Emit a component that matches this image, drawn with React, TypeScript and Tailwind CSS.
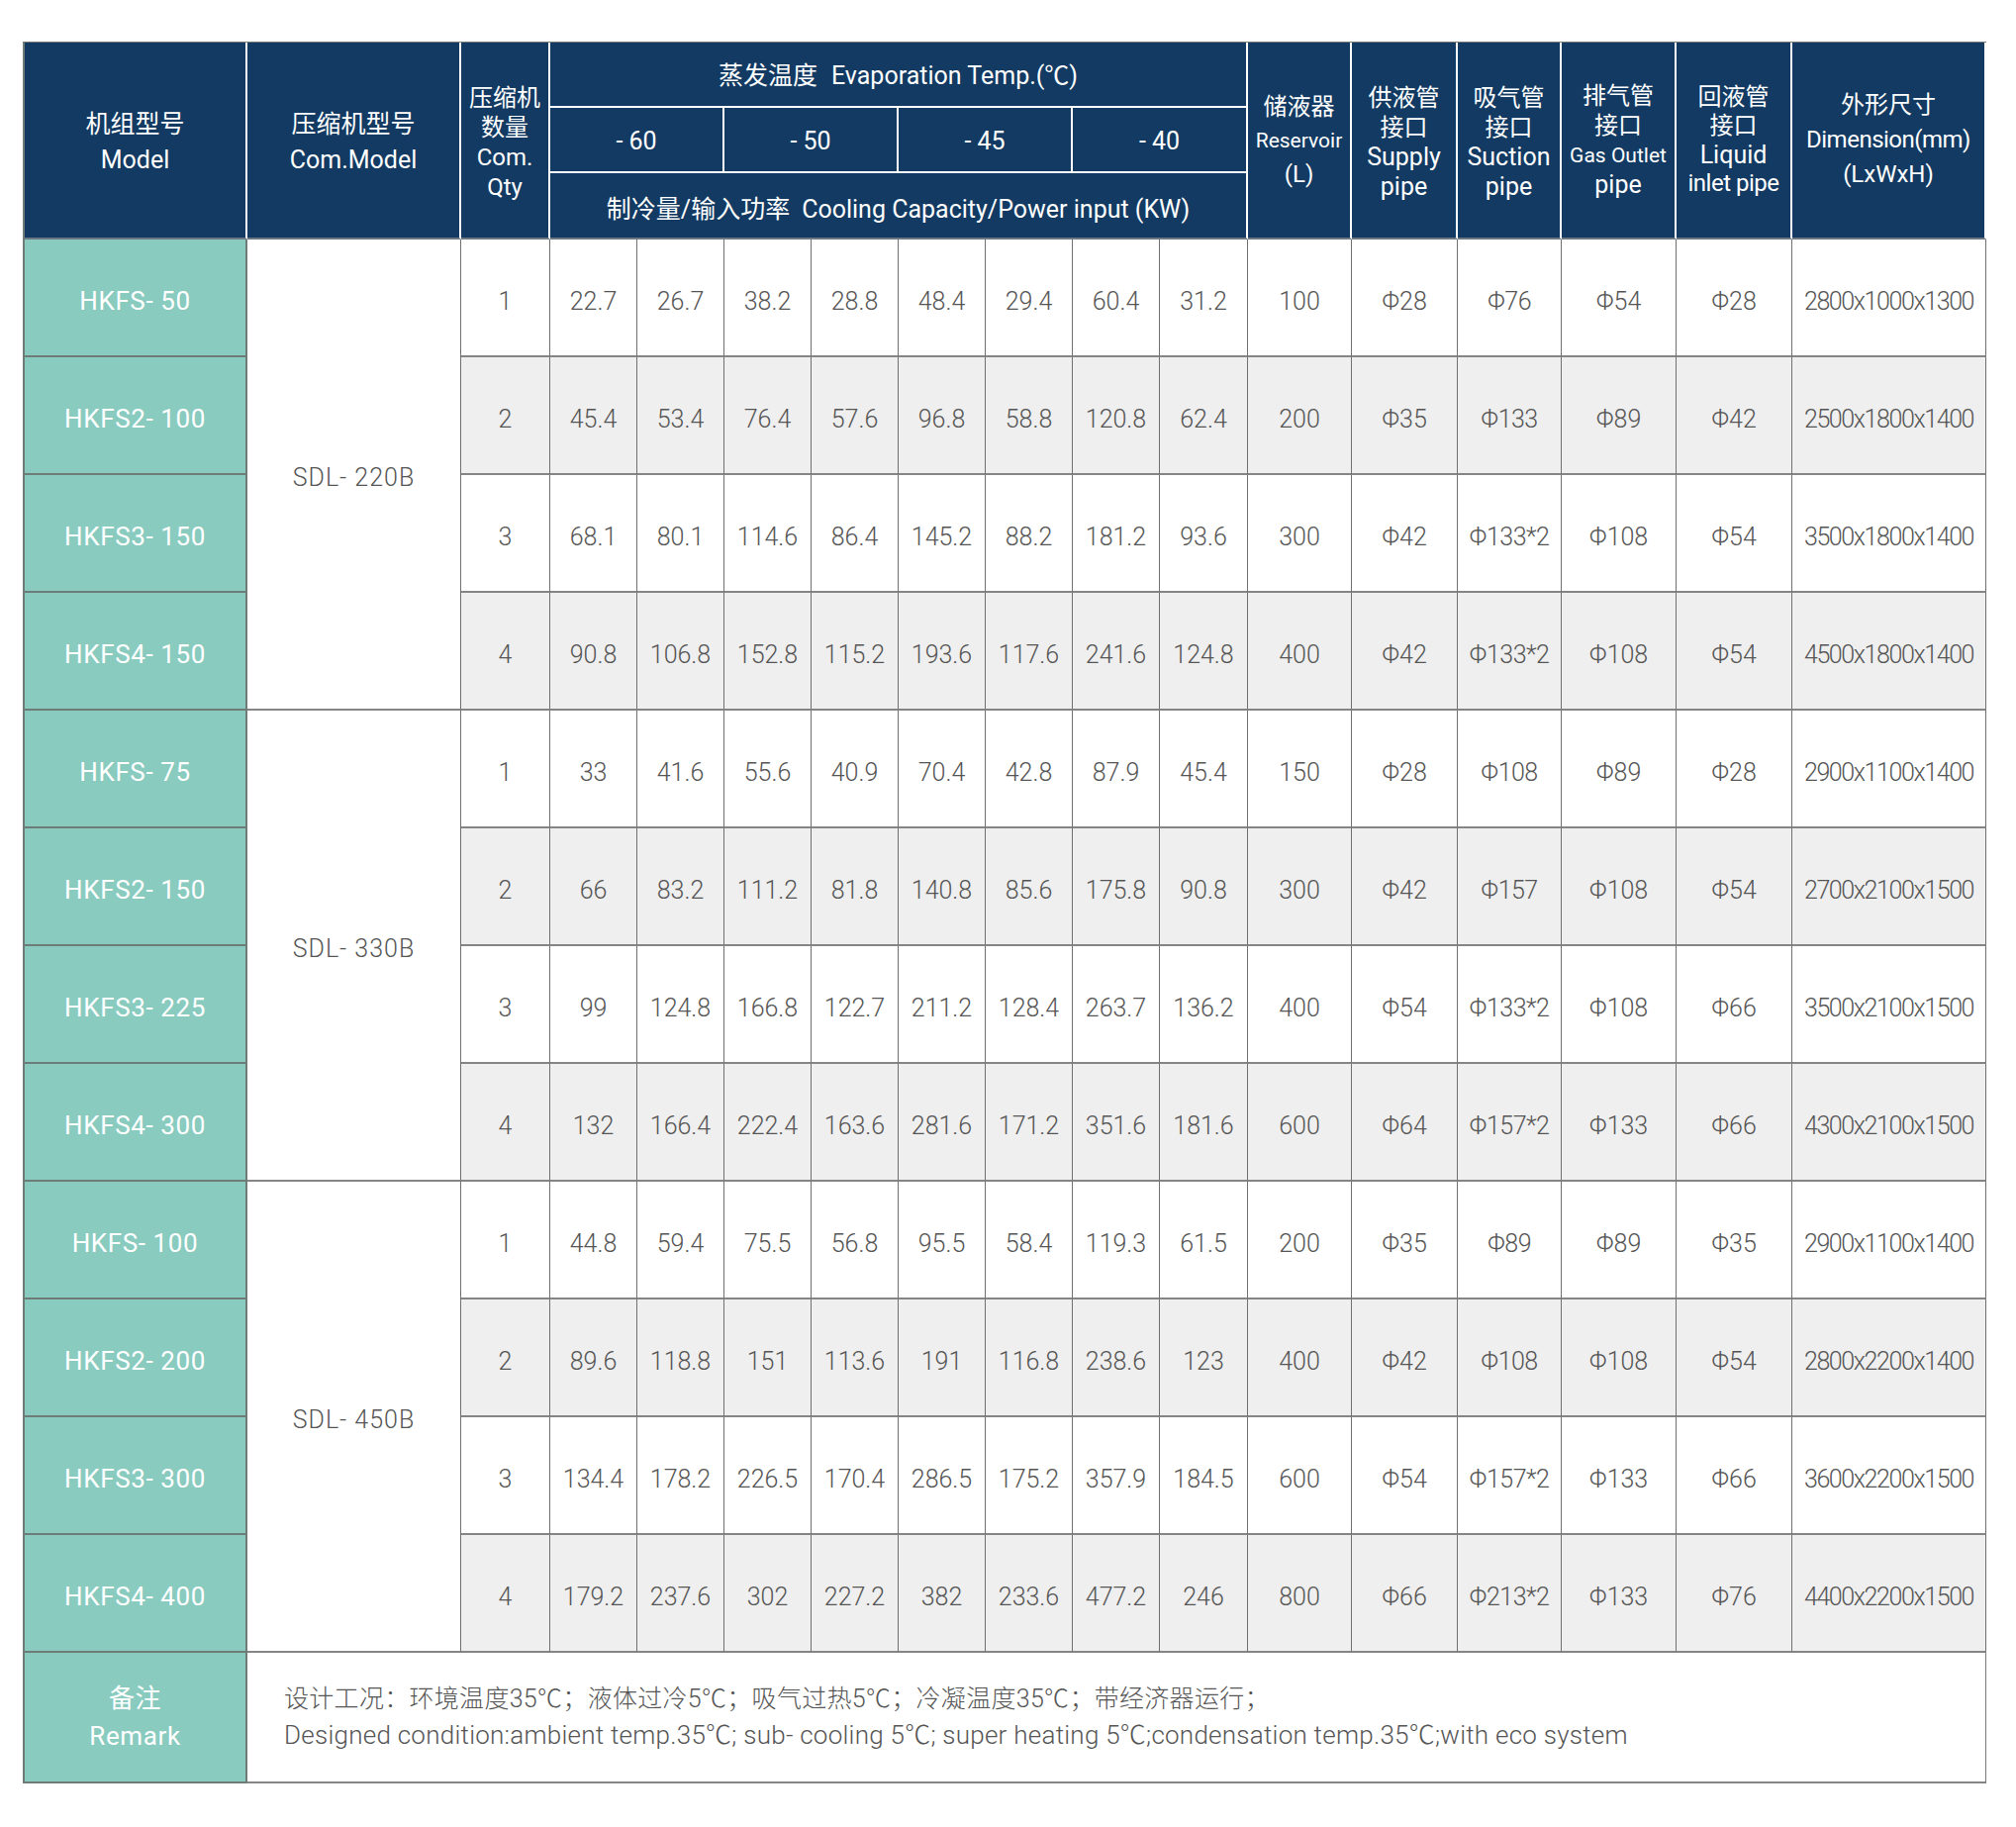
import React from "react";

type Row = [string, string, string[], string, string, string, string, string, string];

const groups: { com: string; rows: Row[] }[] = [
  {
    com: "SDL- 220B",
    rows: [
      ["HKFS- 50", "1", ["22.7", "26.7", "38.2", "28.8", "48.4", "29.4", "60.4", "31.2"], "100", "Φ28", "Φ76", "Φ54", "Φ28", "2800x1000x1300"],
      ["HKFS2- 100", "2", ["45.4", "53.4", "76.4", "57.6", "96.8", "58.8", "120.8", "62.4"], "200", "Φ35", "Φ133", "Φ89", "Φ42", "2500x1800x1400"],
      ["HKFS3- 150", "3", ["68.1", "80.1", "114.6", "86.4", "145.2", "88.2", "181.2", "93.6"], "300", "Φ42", "Φ133*2", "Φ108", "Φ54", "3500x1800x1400"],
      ["HKFS4- 150", "4", ["90.8", "106.8", "152.8", "115.2", "193.6", "117.6", "241.6", "124.8"], "400", "Φ42", "Φ133*2", "Φ108", "Φ54", "4500x1800x1400"],
    ],
  },
  {
    com: "SDL- 330B",
    rows: [
      ["HKFS- 75", "1", ["33", "41.6", "55.6", "40.9", "70.4", "42.8", "87.9", "45.4"], "150", "Φ28", "Φ108", "Φ89", "Φ28", "2900x1100x1400"],
      ["HKFS2- 150", "2", ["66", "83.2", "111.2", "81.8", "140.8", "85.6", "175.8", "90.8"], "300", "Φ42", "Φ157", "Φ108", "Φ54", "2700x2100x1500"],
      ["HKFS3- 225", "3", ["99", "124.8", "166.8", "122.7", "211.2", "128.4", "263.7", "136.2"], "400", "Φ54", "Φ133*2", "Φ108", "Φ66", "3500x2100x1500"],
      ["HKFS4- 300", "4", ["132", "166.4", "222.4", "163.6", "281.6", "171.2", "351.6", "181.6"], "600", "Φ64", "Φ157*2", "Φ133", "Φ66", "4300x2100x1500"],
    ],
  },
  {
    com: "SDL- 450B",
    rows: [
      ["HKFS- 100", "1", ["44.8", "59.4", "75.5", "56.8", "95.5", "58.4", "119.3", "61.5"], "200", "Φ35", "Φ89", "Φ89", "Φ35", "2900x1100x1400"],
      ["HKFS2- 200", "2", ["89.6", "118.8", "151", "113.6", "191", "116.8", "238.6", "123"], "400", "Φ42", "Φ108", "Φ108", "Φ54", "2800x2200x1400"],
      ["HKFS3- 300", "3", ["134.4", "178.2", "226.5", "170.4", "286.5", "175.2", "357.9", "184.5"], "600", "Φ54", "Φ157*2", "Φ133", "Φ66", "3600x2200x1500"],
      ["HKFS4- 400", "4", ["179.2", "237.6", "302", "227.2", "382", "233.6", "477.2", "246"], "800", "Φ66", "Φ213*2", "Φ133", "Φ76", "4400x2200x1500"],
    ],
  },
];

const H = "bg-[#123a62] text-white text-center align-middle font-normal border-r-2 border-r-white p-0";
const HB = "border-b-2 border-b-[#6b7884]";
const HW = "border-b-2 border-b-white";
const TEAL = "bg-[#89cbbf] text-white text-center align-middle text-[26px] tracking-[0.6px] border-r-2 border-r-[#6d7b79] border-b-2 border-b-[#6d7b79] p-0";
const CELL = "text-center align-middle text-[25px] font-light text-[#555555] border-r border-r-[#707070] border-b-2 border-b-[#858585] p-0 pt-[8px]";

export default function App() {
  let idx = 0;
  return (
    <div className="w-[2037px] min-h-[1846px] bg-white pl-[23px] pt-[42px] font-['Roboto','Noto_Sans_CJK_SC',sans-serif]">
      <table className="table-fixed border-separate border-spacing-0 w-[1982px] border-t border-t-[#7a7a7a] border-l-2 border-l-[#6d7b79]">
        <colgroup>
          <col className="w-[225px]" />
          <col className="w-[216px]" />
          <col className="w-[90px]" />
          <col className="w-[88px]" />
          <col className="w-[88px]" />
          <col className="w-[88px]" />
          <col className="w-[88px]" />
          <col className="w-[88px]" />
          <col className="w-[88px]" />
          <col className="w-[88px]" />
          <col className="w-[89px]" />
          <col className="w-[105px]" />
          <col className="w-[107px]" />
          <col className="w-[105px]" />
          <col className="w-[116px]" />
          <col className="w-[117px]" />
          <col className="w-[196px]" />
        </colgroup>
        <thead>
          <tr className="h-[66px]">
            <th rowSpan={3} className={`${H} ${HB} text-[25px] leading-[36px] pt-[4px]`}>
              <div>机组型号</div>
              <div>Model</div>
            </th>
            <th rowSpan={3} className={`${H} ${HB} text-[25px] leading-[36px] pt-[4px]`}>
              <div>压缩机型号</div>
              <div>Com.Model</div>
            </th>
            <th rowSpan={3} className={`${H} ${HB} text-[24px] leading-[30px] pt-[4px]`}>
              <div>压缩机</div>
              <div>数量</div>
              <div>Com.</div>
              <div>Qty</div>
            </th>
            <th colSpan={8} className={`${H} ${HW} text-[25px] pt-[4px]`}>
              蒸发温度<span className="ml-[14px]">Evaporation Temp.(℃)</span>
            </th>
            <th rowSpan={3} className={`${H} ${HB} leading-[34px]`}>
              <div className="text-[24px]">储液器</div>
              <div className="text-[21px]">Reservoir</div>
              <div className="text-[24px]">(L)</div>
            </th>
            <th rowSpan={3} className={`${H} ${HB} text-[24px] leading-[30px] pt-[4px]`}>
              <div>供液管</div>
              <div>接口</div>
              <div className="text-[25px]">Supply</div>
              <div className="text-[25px]">pipe</div>
            </th>
            <th rowSpan={3} className={`${H} ${HB} text-[24px] leading-[30px] pt-[4px]`}>
              <div>吸气管</div>
              <div>接口</div>
              <div className="text-[25px]">Suction</div>
              <div className="text-[25px]">pipe</div>
            </th>
            <th rowSpan={3} className={`${H} ${HB} text-[24px] leading-[30px]`}>
              <div>排气管</div>
              <div>接口</div>
              <div className="text-[21px]">Gas Outlet</div>
              <div className="text-[25px]">pipe</div>
            </th>
            <th rowSpan={3} className={`${H} ${HB} text-[24px] leading-[29px]`}>
              <div>回液管</div>
              <div>接口</div>
              <div className="text-[25px]">Liquid</div>
              <div className="text-[24px] tracking-[-0.5px]">inlet pipe</div>
            </th>
            <th rowSpan={3} className={`${H} ${HB} border-r border-r-[#7a7a7a] text-[24px] leading-[35px]`}>
              <div>外形尺寸</div>
              <div className="tracking-[-0.5px]">Dimension(mm)</div>
              <div>(LxWxH)</div>
            </th>
          </tr>
          <tr className="h-[66px]">
            {["- 60", "- 50", "- 45", "- 40"].map((t) => (
              <th key={t} colSpan={2} className={`${H} ${HW} text-[25px] pt-[4px]`}>
                {t}
              </th>
            ))}
          </tr>
          <tr className="h-[67px]">
            <th colSpan={8} className={`${H} ${HB} text-[25px] pt-[8px]`}>
              制冷量/输入功率<span className="ml-[12px]">Cooling Capacity/Power input (KW)</span>
            </th>
          </tr>
        </thead>
        <tbody>
          {groups.map((g) =>
            g.rows.map((r, i) => {
              const gray = idx % 2 === 1;
              idx++;
              const bg = gray ? "bg-[#efefef]" : "bg-white";
              return (
                <tr key={r[0]} className="h-[119px]">
                  <td className={`${TEAL} pt-[8px]`}>{r[0]}</td>
                  {i === 0 && (
                    <td rowSpan={4} className={`${CELL} bg-white tracking-[1px]`}>
                      {g.com}
                    </td>
                  )}
                  <td className={`${CELL} ${bg}`}>{r[1]}</td>
                  {r[2].map((v, k) => (
                    <td key={k} className={`${CELL} ${bg}`}>
                      {v}
                    </td>
                  ))}
                  <td className={`${CELL} ${bg}`}>{r[3]}</td>
                  <td className={`${CELL} ${bg}`}>{r[4]}</td>
                  <td className={`${CELL} ${bg} tracking-[-0.5px]`}>{r[5]}</td>
                  <td className={`${CELL} ${bg}`}>{r[6]}</td>
                  <td className={`${CELL} ${bg}`}>{r[7]}</td>
                  <td className={`${CELL} ${bg} tracking-[-1.4px]`}>{r[8]}</td>
                </tr>
              );
            })
          )}
          <tr className="h-[132px]">
            <td className={`${TEAL} text-[25px] leading-[38px]`}>
              <div>备注</div>
              <div>Remark</div>
            </td>
            <td
              colSpan={16}
              className="bg-white text-left align-middle font-light text-[#555555] leading-[36px] pl-[37px] border-r border-r-[#7a7a7a] border-b-2 border-b-[#858585]"
            >
              <div className="text-[25px] tracking-[0.3px]">设计工况：环境温度35℃；液体过冷5℃；吸气过热5℃；冷凝温度35℃；带经济器运行；</div>
              <div className="text-[26px] tracking-[0.25px]">Designed condition:ambient temp.35℃; sub- cooling 5℃; super heating 5℃;condensation temp.35℃;with eco system</div>
            </td>
          </tr>
        </tbody>
      </table>
    </div>
  );
}
